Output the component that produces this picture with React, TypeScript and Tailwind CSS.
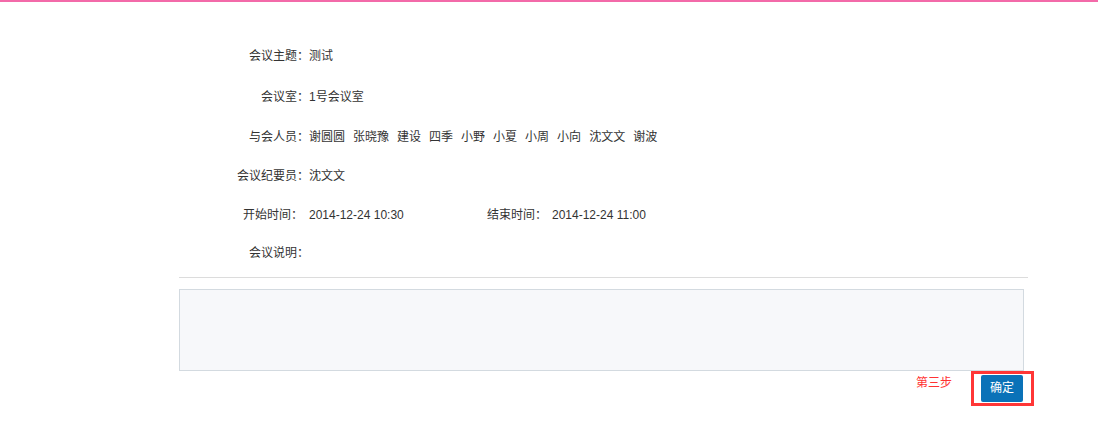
import React from "react";

const names = ["谢圆圆", "张晓豫", "建设", "四季", "小野", "小夏", "小周", "小向", "沈文文", "谢波"];

function Row({ label, h, children }: { label: string; h: string; children?: React.ReactNode }) {
  return (
    <div className={`flex items-center ${h}`}>
      <div className="w-[130px] text-right shrink-0">{label}</div>
      <div className="flex items-center">{children}</div>
    </div>
  );
}

export default function App() {
  return (
    <div className="w-[1098px] h-[442px] bg-white text-[12px] leading-[16px] text-[#333] font-['Liberation_Sans','Noto_Sans_CJK_SC',sans-serif] overflow-hidden">
      <div className="h-[2px] bg-[#f36aa9]" />
      <div className="ml-[179px] pt-[34px]">
        <Row label="会议主题：" h="h-[40px]">测试</Row>
        <Row label="会议室：" h="h-[41px]">1号会议室</Row>
        <Row label="与会人员：" h="h-[40px]">
          <div className="flex gap-[8px]">
            {names.map((n) => (
              <span key={n}>{n}</span>
            ))}
          </div>
        </Row>
        <Row label="会议纪要员：" h="h-[38px]">沈文文</Row>
        <div className="flex items-center h-[39px] pt-[1px]">
          <div className="w-[124px] text-right shrink-0">开始时间：</div>
          <div className="ml-[6px] w-[178px] shrink-0">2014-12-24 10:30</div>
          <div className="w-[60px] shrink-0">结束时间：</div>
          <div className="ml-[5px]">2014-12-24 11:00</div>
        </div>
        <Row label="会议说明：" h="h-[38px]" />
        <div className="mt-[5px] w-[849px] h-px bg-[#dcdcdc]" />
        <div className="mt-[11px] w-[845px] h-[82px] border border-[#d3dae0] bg-[#f7f8fa]" />
        <div className="w-[855px] flex justify-end items-start">
          <div className="mt-[4px] mr-[19px] text-[#ff3333]">第三步</div>
          <div className="border-[3px] border-[#ff3636] pl-[7px] pr-[8px] py-[1px]">
            <button className="w-[42px] h-[27px] rounded-[2px] bg-[#0a72b8] text-white text-[12px] leading-[27px] flex items-center justify-center">
              确定
            </button>
          </div>
        </div>
      </div>
    </div>
  );
}
